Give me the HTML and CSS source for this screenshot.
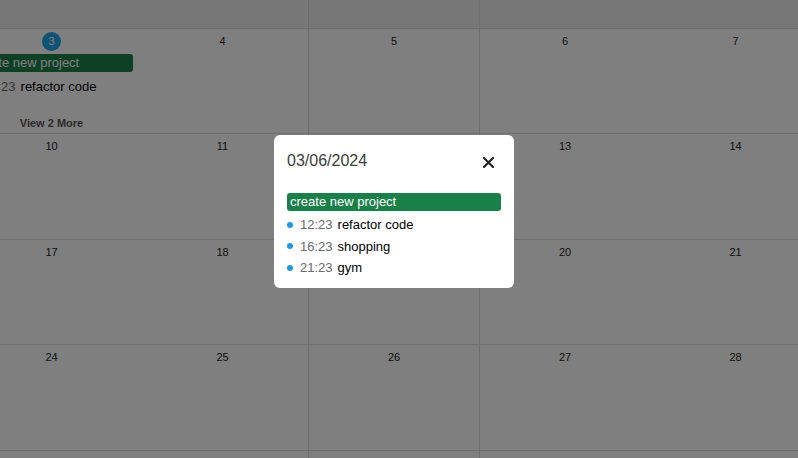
FILE: index.html
```html
<!DOCTYPE html>
<html lang="en">
<head>
<meta charset="utf-8">
<title>Calendar</title>
<link rel="stylesheet" href="styles.css">
</head>
<body>
<div class="month">
  <div class="week other">
    <div class="day"></div><div class="day"></div><div class="day divider"></div><div class="day divider"></div><div class="day"></div>
  </div>
  <div class="week">
    <div class="day">
      <div class="day-num"><span class="badge">3</span></div>
      <div class="bar">create new project</div>
      <div class="event"><span class="dot"></span><span class="time">12:23</span><span class="title">refactor code</span></div>
      <div class="more">View 2 More</div>
    </div>
    <div class="day"><div class="day-num">4</div></div>
    <div class="day divider"><div class="day-num">5</div></div>
    <div class="day divider"><div class="day-num">6</div></div>
    <div class="day"><div class="day-num">7</div></div>
  </div>
  <div class="week">
    <div class="day"><div class="day-num">10</div></div>
    <div class="day"><div class="day-num">11</div></div>
    <div class="day divider"><div class="day-num">12</div></div>
    <div class="day divider"><div class="day-num">13</div></div>
    <div class="day"><div class="day-num">14</div></div>
  </div>
  <div class="week">
    <div class="day"><div class="day-num">17</div></div>
    <div class="day"><div class="day-num">18</div></div>
    <div class="day divider"><div class="day-num">19</div></div>
    <div class="day divider"><div class="day-num">20</div></div>
    <div class="day"><div class="day-num">21</div></div>
  </div>
  <div class="week">
    <div class="day"><div class="day-num">24</div></div>
    <div class="day"><div class="day-num">25</div></div>
    <div class="day divider"><div class="day-num">26</div></div>
    <div class="day divider"><div class="day-num">27</div></div>
    <div class="day"><div class="day-num">28</div></div>
  </div>
  <div class="week">
    <div class="day"></div><div class="day"></div><div class="day divider"></div><div class="day divider"></div><div class="day"></div>
  </div>
</div>

<div class="overlay"></div>

<div class="popover">
  <div class="pop-head">
    <span class="pop-date">03/06/2024</span>
    <svg class="close" width="11" height="11" viewBox="0 0 11 11" aria-label="close">
      <path d="M1 1 L10 10 M10 1 L1 10" stroke="#222" stroke-width="2.2" stroke-linecap="square" fill="none"/>
    </svg>
  </div>
  <div class="bar pop-bar">create new project</div>
  <div class="event pop-event"><span class="dot"></span><span class="time">12:23</span><span class="title">refactor code</span></div>
  <div class="event pop-event"><span class="dot"></span><span class="time">16:23</span><span class="title">shopping</span></div>
  <div class="event pop-event"><span class="dot"></span><span class="time">21:23</span><span class="title">gym</span></div>
</div>
</body>
</html>
```

FILE: styles.css
```css
html, body {
  margin: 0;
  padding: 0;
  overflow: hidden;
  background: #fff;
  font-family: "Liberation Sans", Arial, sans-serif;
}

.month {
  display: grid;
  grid-template-rows: 28px 105px 106px 105px 106px 8px;
  width: 855px;
  height: 458px;
  margin-left: -34px;
}

.week {
  display: grid;
  grid-template-columns: repeat(5, 171px);
  border-top: 1px solid #dddddd;
  box-sizing: border-box;
  overflow: hidden;
}

.week.other {
  border-top: none;
  background: #efefef;
}

.day {
  box-sizing: border-box;
  min-width: 0;
}

.day.divider {
  border-left: 1px solid #dddddd;
}

.day-num {
  height: 20px;
  margin-top: 2px;
  display: flex;
  justify-content: center;
  align-items: center;
  font-size: 11px;
  color: #222;
}

.badge {
  width: 19px;
  height: 19px;
  border-radius: 50%;
  background: #22a6e8;
  color: #fff;
  display: flex;
  justify-content: center;
  align-items: center;
  font-size: 11px;
}

.bar {
  margin: 3px 4px 0 4px;
  height: 18px;
  line-height: 18px;
  padding-left: 3px;
  border-radius: 3px;
  background: #1a8049;
  color: #fff;
  font-size: 13px;
  white-space: nowrap;
  overflow: hidden;
}

.event {
  display: flex;
  align-items: center;
  height: 22px;
  margin-top: 3px;
  padding-left: 4px;
  font-size: 13px;
  white-space: nowrap;
}

.dot {
  width: 6px;
  height: 6px;
  border-radius: 50%;
  background: #1e98e4;
  margin-right: 7px;
  flex: none;
}

.time {
  color: #6a6a6a;
  margin-right: 5px;
}

.title {
  color: #000;
}

.more {
  margin-top: 19px;
  text-align: center;
  font-size: 11px;
  line-height: 14px;
  font-weight: bold;
  color: #555;
}

.overlay {
  position: fixed;
  inset: 0;
  background: rgba(0, 0, 0, 0.5);
}

.popover {
  position: absolute;
  left: 274px;
  top: 135px;
  width: 240px;
  height: 153px;
  box-sizing: border-box;
  padding: 17px 13px 0;
  background: #fff;
  border-radius: 6px;
}

.pop-head {
  display: flex;
  justify-content: space-between;
  align-items: center;
  height: 18px;
}

.pop-date {
  font-size: 16px;
  color: #3c3c3c;
}

.close {
  margin-right: 7px;
  margin-top: 2px;
}

.pop-bar {
  margin: 23px 0 0 0;
}

.pop-event {
  height: 21.5px;
  margin-top: 0;
  padding-left: 0;
}

.pop-bar + .pop-event {
  margin-top: 3px;
}
```
